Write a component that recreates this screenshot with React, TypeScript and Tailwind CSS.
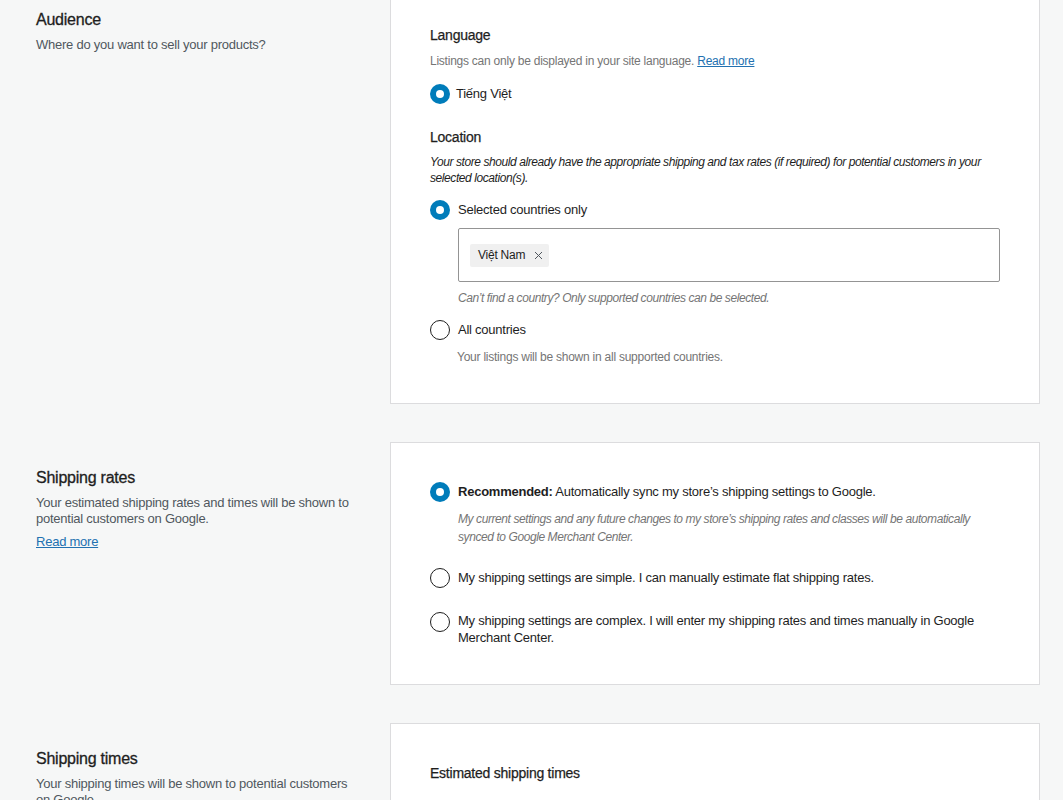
import React from "react";

function Radio({ checked }: { checked?: boolean }) {
  if (checked) {
    return (
      <span className="flex h-5 w-5 shrink-0 items-center justify-center rounded-full bg-[#007cba]">
        <span className="h-2 w-2 rounded-full bg-white" />
      </span>
    );
  }
  return <span className="h-5 w-5 shrink-0 rounded-full border-[1.5px] border-[#1e1e1e] bg-white" />;
}

function Section({
  title,
  children,
  side,
  first,
}: {
  title: string;
  side: React.ReactNode;
  children: React.ReactNode;
  first?: boolean;
}) {
  return (
    <div className="flex gap-[34px]">
      <div className="w-[320px] shrink-0 pt-[24px]">
        <h2 className="text-[16px] leading-6 text-[#1e1e1e] [-webkit-text-stroke:0.3px]">{title}</h2>
        <div className="mt-[5px] text-[13px] leading-4 text-[#50575e]">{side}</div>
      </div>
      <div
        className={`flex-1 border border-[#dcdcde] bg-white px-[39px] pb-[38px] ${first ? "pt-[40px]" : "pt-[39px]"}`}
      >
        {children}
      </div>
    </div>
  );
}

export default function App() {
  return (
    <div
      className="min-h-[800px] overflow-hidden bg-[#f6f7f7] pl-[36px] pr-[23px] tracking-[-0.015em] text-[#1e1e1e]"
      style={{ fontFamily: '"Liberation Sans", Arial, sans-serif' }}
    >
      <div className="-mt-4 flex flex-col gap-[38px]">
        <Section first title="Audience" side={<p>Where do you want to sell your products?</p>}>
          <h3 className="text-[14px] leading-5 [-webkit-text-stroke:0.25px]">Language</h3>
          <p className="mt-[8px] text-[12px] leading-4 text-[#757575]">
            Listings can only be displayed in your site language.{" "}
            <a href="#" className="text-[#2271b1] underline">
              Read more
            </a>
          </p>
          <label className="mt-[15px] flex items-center gap-[6px] text-[13px] leading-5">
            <Radio checked />
            <span>Tiếng Việt</span>
          </label>

          <h3 className="mt-[23px] text-[14px] leading-5 [-webkit-text-stroke:0.25px]">Location</h3>
          <p className="mt-[7px] text-[12px] leading-4 tracking-[-0.035em] italic">
            Your store should already have the appropriate shipping and tax rates (if required) for potential
            customers in your selected location(s).
          </p>
          <label className="mt-[14px] flex items-center gap-[8px] text-[13px] leading-5">
            <Radio checked />
            <span>Selected countries only</span>
          </label>
          <div className="mt-[8px] ml-[28px] flex h-[54px] items-center rounded-[2px] border border-[#949494] px-[11px]">
            <span className="flex h-[23px] items-center gap-[9px] rounded-[2px] bg-[#f0f0f0] pr-[6px] pl-[8px] text-[12px]">
              Việt Nam
              <svg width="9" height="9" viewBox="0 0 9 9" className="text-[#50575e]">
                <path d="M1 1L8 8M8 1L1 8" stroke="currentColor" strokeWidth="1" />
              </svg>
            </span>
          </div>
          <p className="mt-[8px] ml-[28px] text-[12px] leading-4 tracking-[-0.035em] text-[#757575] italic">
            Can’t find a country? Only supported countries can be selected.
          </p>
          <label className="mt-[14px] flex items-center gap-[8px] text-[13px] leading-5">
            <Radio />
            <span>All countries</span>
          </label>
          <p className="mt-[9px] ml-[27px] text-[12px] leading-4 text-[#757575]">
            Your listings will be shown in all supported countries.
          </p>
        </Section>

        <Section
          title="Shipping rates"
          side={
            <>
              <p>Your estimated shipping rates and times will be shown to potential customers on Google.</p>
              <a href="#" className="mt-[7px] inline-block text-[#2271b1] underline">
                Read more
              </a>
            </>
          }
        >
          <label className="flex items-center gap-[8px] text-[13px] leading-5">
            <Radio checked />
            <span>
              <strong className="font-semibold">Recommended:</strong> Automatically sync my store’s shipping settings
              to Google.
            </span>
          </label>
          <p className="mt-[8px] ml-[28px] text-[12px] leading-[18px] tracking-[-0.035em] text-[#757575] italic">
            My current settings and any future changes to my store’s shipping rates and classes will be automatically
            synced to Google Merchant Center.
          </p>
          <label className="mt-[22px] flex items-center gap-[8px] text-[13px] leading-5">
            <Radio />
            <span>My shipping settings are simple. I can manually estimate flat shipping rates.</span>
          </label>
          <label className="mt-[24px] flex items-start gap-[8px] text-[13px] leading-[17px]">
            <Radio />
            <span>
              My shipping settings are complex. I will enter my shipping rates and times manually in Google Merchant
              Center.
            </span>
          </label>
        </Section>

        <Section
          title="Shipping times"
          side={<p>Your shipping times will be shown to potential customers on Google.</p>}
        >
          <h3 className="text-[14px] leading-5 [-webkit-text-stroke:0.25px]">Estimated shipping times</h3>
          <p className="mt-[16px] text-[12px] leading-4 text-[#757575]">
            Set up a default shipping time for all countries.
          </p>
          <div className="h-[120px]" />
        </Section>
      </div>
    </div>
  );
}
